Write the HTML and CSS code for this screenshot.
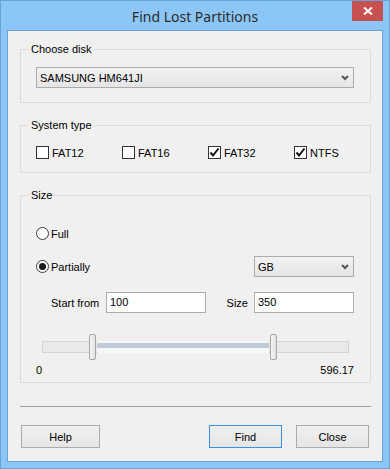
FILE: index.html
```html
<!DOCTYPE html>
<html lang="en">
<head>
  <meta charset="UTF-8" />
  <title>Find Lost Partitions</title>
  <link rel="stylesheet" href="styles.css">
</head>
<body>
  <div class="window">
    <div class="titlebar">
      <span class="title">Find Lost Partitions</span>
      <button class="close-btn" type="button" aria-label="Close">
        <svg width="10" height="8" viewBox="0 0 10 8">
          <path d="M1 0.5 L9 7.5 M9 0.5 L1 7.5" stroke="#fff" stroke-width="2" fill="none"/>
        </svg>
      </button>
    </div>

    <div class="client">
      <div class="group group-disk">
        <span class="group-title">Choose disk</span>
        <div class="dropdown">
          <span>SAMSUNG HM641JI</span>
          <svg class="chevron" width="8" height="6" viewBox="0 0 8 6">
            <polyline points="1,1 4,4 7,1" stroke="#555" stroke-width="2" fill="none"/>
          </svg>
        </div>
      </div>

      <div class="group group-fs">
        <span class="group-title">System type</span>
        <div class="check-row">
          <label class="check"><span class="box"></span>FAT12</label>
          <label class="check"><span class="box"></span>FAT16</label>
          <label class="check">
            <span class="box">
              <svg width="11" height="11" viewBox="0 0 11 11"><polyline points="1.5,5.5 4,8.5 9.5,1.5" stroke="#111" stroke-width="2" fill="none"/></svg>
            </span>FAT32
          </label>
          <label class="check">
            <span class="box">
              <svg width="11" height="11" viewBox="0 0 11 11"><polyline points="1.5,5.5 4,8.5 9.5,1.5" stroke="#111" stroke-width="2" fill="none"/></svg>
            </span>NTFS
          </label>
        </div>
      </div>

      <div class="group group-size">
        <span class="group-title">Size</span>

        <div class="option-row row-full">
          <label class="radio"><span class="circle"></span>Full</label>
        </div>

        <div class="option-row row-partial">
          <label class="radio"><span class="circle checked"></span>Partially</label>
          <div class="dropdown dropdown-unit">
            <span>GB</span>
            <svg class="chevron" width="8" height="6" viewBox="0 0 8 6">
              <polyline points="1,1 4,4 7,1" stroke="#555" stroke-width="2" fill="none"/>
            </svg>
          </div>
        </div>

        <div class="option-row row-range">
          <span class="field-label start-label">Start from</span>
          <div class="textbox">100</div>
          <span class="field-label size-label">Size</span>
          <div class="textbox">350</div>
        </div>

        <div class="slider">
          <div class="track"></div>
          <div class="selection" style="left: 55px; width: 172px;"></div>
          <div class="thumb" style="left: 47px;"></div>
          <div class="thumb" style="left: 228px;"></div>
        </div>

        <div class="scale">
          <span>0</span>
          <span>596.17</span>
        </div>
      </div>

      <div class="separator"></div>

      <div class="buttons">
        <button class="btn btn-help" type="button">Help</button>
        <button class="btn btn-find" type="button">Find</button>
        <button class="btn btn-close" type="button">Close</button>
      </div>
    </div>
  </div>
</body>
</html>
```

FILE: styles.css
```css
* {
  margin: 0;
  padding: 0;
  box-sizing: border-box;
}

body {
  width: 390px;
  height: 469px;
  overflow: hidden;
  font-family: 'Liberation Sans', Arial, sans-serif;
  font-size: 11px;
  color: #000;
}

.window {
  width: 390px;
  height: 469px;
  background: #8cc6f6;
  border: 1px solid #6aa3d8;
  padding: 0 6px 6px;
  display: flex;
  flex-direction: column;
}

.titlebar {
  position: relative;
  height: 29px;
  display: flex;
  align-items: center;
  justify-content: center;
}

.title {
  font-family: 'Noto Sans', 'Open Sans', sans-serif;
  font-size: 14px;
  color: #2b2b2b;
  padding-top: 1px;
}

.close-btn {
  position: absolute;
  top: 0;
  right: 0;
  width: 31px;
  height: 20px;
  border: none;
  background: #c75050;
  display: flex;
  align-items: center;
  justify-content: center;
}

.client {
  flex: 1;
  background: #f0f0f0;
  border: 1px solid #6fa2d2;
  padding: 18px 11px 0 12px;
  display: flex;
  flex-direction: column;
}

/* group boxes */

.group {
  border: 1px solid #dcdcdc;
  display: flex;
  flex-direction: column;
  padding: 0 16px 0 15px;
}

.group-title {
  align-self: flex-start;
  margin: -7px 0 0 -7px;
  padding: 0 2px;
  line-height: 13px;
  background: #f0f0f0;
}

.group-disk {
  padding-bottom: 14px;
}

.group-disk .dropdown {
  margin-top: 11px;
}

.group-fs {
  margin-top: 22px;
  padding-bottom: 13px;
}

.group-size {
  margin-top: 22px;
  padding-bottom: 5px;
}

/* controls */

.dropdown {
  height: 21px;
  border: 1px solid #acacac;
  background: linear-gradient(#f2f2f2, #e5e5e5);
  display: flex;
  align-items: center;
  justify-content: space-between;
  padding: 0 4px 0 3px;
}

.dropdown-unit {
  width: 100px;
}

.check-row {
  margin-top: 14px;
  display: grid;
  grid-template-columns: repeat(4, 86px);
}

.check {
  display: flex;
  align-items: center;
  height: 13px;
}

.box {
  width: 13px;
  height: 13px;
  border: 1px solid #333;
  background: #fff;
  margin-right: 3px;
  display: flex;
  align-items: center;
  justify-content: center;
}

.option-row {
  height: 21px;
  display: flex;
  align-items: center;
}

.row-full {
  margin-top: 21px;
}

.row-partial {
  margin-top: 12px;
  justify-content: space-between;
}

.row-range {
  margin-top: 15px;
  padding-left: 15px;
}

.radio {
  display: flex;
  align-items: center;
}

.circle {
  width: 13px;
  height: 13px;
  border: 1px solid #3c3c3c;
  border-radius: 50%;
  background: #fff;
  margin-right: 2px;
  display: flex;
  align-items: center;
  justify-content: center;
}

.circle.checked::after {
  content: "";
  width: 7px;
  height: 7px;
  border-radius: 50%;
  background: #1a1a1a;
}

.start-label {
  width: 55px;
}

.size-label {
  margin-left: auto;
  margin-right: 6px;
}

.textbox {
  width: 100px;
  height: 21px;
  border: 1px solid #acacac;
  background: #fff;
  padding: 0 3px;
  line-height: 19px;
}

/* slider */

.slider {
  position: relative;
  margin: 21px 0 0 6px;
  width: 307px;
  height: 26px;
  display: flex;
  align-items: center;
}

.track {
  width: 100%;
  height: 12px;
  border: 1px solid #d4d4d4;
  background: #e7e9ea;
}

.selection {
  position: absolute;
  top: 7px;
  height: 12px;
  background: #f7f7f7;
  border-top: 3px solid #f7f7f7;
  border-bottom: 3px solid #f7f7f7;
}

.selection::after {
  content: "";
  display: block;
  height: 5px;
  margin-top: -1px;
  background: #bfcbd7;
}

.thumb {
  position: absolute;
  top: 0;
  width: 7px;
  height: 26px;
  border: 1px solid #a6a6a6;
  border-radius: 2px;
  background: linear-gradient(90deg, #f4f4f4, #e2e2e2);
}

.scale {
  margin-top: 4px;
  height: 13px;
  line-height: 13px;
  display: flex;
  justify-content: space-between;
}

/* bottom */

.separator {
  margin-top: 23px;
  height: 1px;
  background: #a0a0a0;
}

.buttons {
  margin: 18px 2px 0 1px;
  display: flex;
}

.btn {
  height: 23px;
  width: 73px;
  border: 1px solid #acacac;
  background: linear-gradient(#f0f0f0, #e5e5e5);
  font-family: 'Liberation Sans', Arial, sans-serif;
  font-size: 11px;
  color: #000;
}

.btn-help {
  width: 79px;
}

.btn-find {
  margin-left: auto;
  border-color: #3c8ee0;
}

.btn-close {
  margin-left: 14px;
}
```
